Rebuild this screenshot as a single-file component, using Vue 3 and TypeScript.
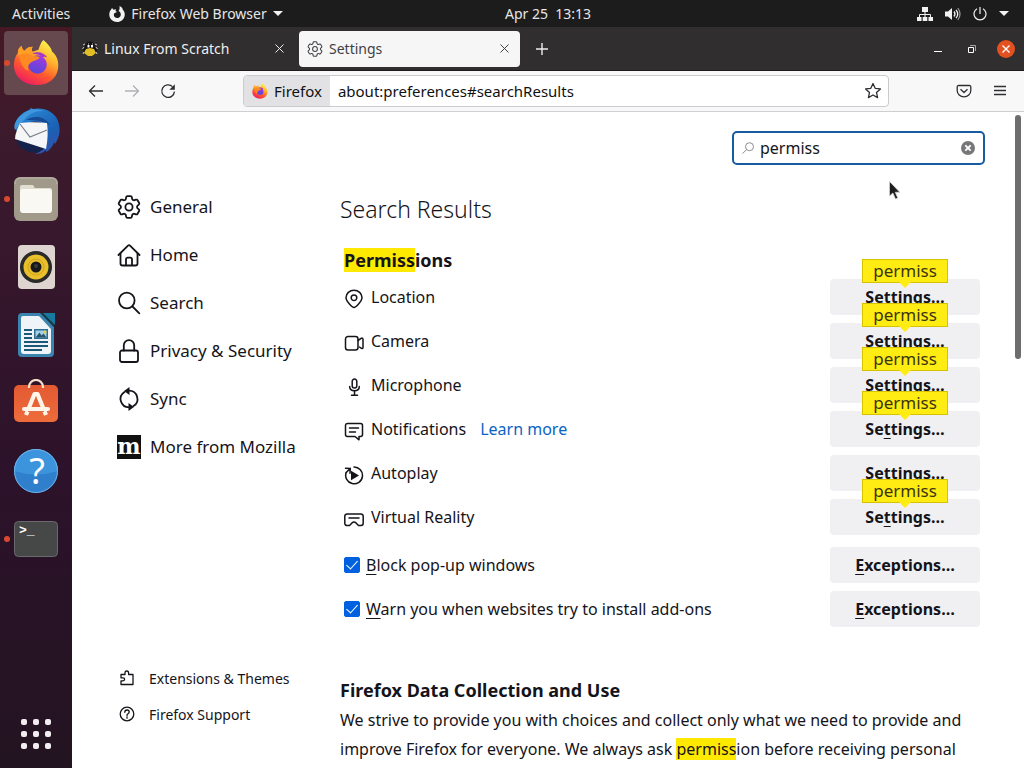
<script setup lang="ts">
import { ref } from 'vue'

interface Glyph {
  box: string
  lines?: string[]
  fills?: string[]
}

interface Permission {
  label: string
  icon: string
  link?: string
  hint: boolean
}

const gear =
  'M9.594 3.94c.09-.542.56-.94 1.11-.94h2.593c.55 0 1.02.398 1.11.94l.213 1.281c.063.374.313.686.645.87.074.04.147.083.22.127.325.196.72.257 1.075.124l1.217-.456a1.125 1.125 0 0 1 1.37.49l1.296 2.247a1.125 1.125 0 0 1-.26 1.431l-1.003.827c-.293.241-.438.613-.43.992a7.723 7.723 0 0 1 0 .255c-.008.378.137.75.43.991l1.004.827c.424.35.534.955.26 1.43l-1.298 2.247a1.125 1.125 0 0 1-1.369.491l-1.217-.456c-.355-.133-.75-.072-1.076.124a6.47 6.47 0 0 1-.22.128c-.331.183-.581.495-.644.869l-.213 1.281c-.09.543-.56.94-1.11.94h-2.594c-.55 0-1.019-.398-1.11-.94l-.213-1.281c-.062-.374-.312-.686-.644-.87a6.52 6.52 0 0 1-.22-.127c-.325-.196-.72-.257-1.076-.124l-1.217.456a1.125 1.125 0 0 1-1.369-.49l-1.297-2.247a1.125 1.125 0 0 1 .26-1.431l1.004-.827c.292-.24.437-.613.43-.991a6.932 6.932 0 0 1 0-.255c.007-.38-.138-.751-.43-.992l-1.004-.827a1.125 1.125 0 0 1-.26-1.43l1.297-2.247a1.125 1.125 0 0 1 1.37-.491l1.216.456c.356.133.751.072 1.076-.124.072-.044.146-.086.22-.128.332-.183.582-.495.644-.869l.214-1.28Z'

const glyphs: Record<string, Glyph> = {
  general: { box: '2 2 20 20', lines: [gear, 'M9 12a3 3 0 1 0 6 0a3 3 0 1 0-6 0'] },
  home: {
    box: '0 0 24 24',
    lines: ['M1.5 12 11 2.6a1.5 1.5 0 0 1 2 0L22.5 12', 'M3.500 10.500v10a2 2 0 0 0 2 2h13a2 2 0 0 0 2-2v-10', 'M9 22v-5.5a1.8 1.8 0 0 1 1.8-1.8h2.4a1.8 1.8 0 0 1 1.8 1.8V22'],
  },
  search: { box: '0 0 24 24', lines: ['M2 9.5a7.8 7.8 0 1 0 15.6 0a7.8 7.8 0 1 0-15.6 0', 'm15.5 15.5 6.8 6.8'] },
  privacy: { box: '0 0 24 24', lines: ['M5 11.5h14a2 2 0 0 1 2 2V21a2 2 0 0 1-2 2H5a2 2 0 0 1-2-2v-7.500a2 2 0 0 1 2-2z', 'M6.800 11.500V6.300a5.200 5.200 0 0 1 10.400 0v5.200'] },
  sync: {
    box: '0 0 24 24',
    lines: ['M12 3.600A8.400 8.400 0 0 1 16.500 19.100', 'M12 20.400A8.400 8.400 0 0 1 7.500 4.900'],
    fills: ['M7 4 12.500 0v8z', 'M17 20l-5.500 4v-8z'],
  },
  location: { box: '0 0 20 20', lines: ['M10 18.600C8.500 18.600 2 12.600 2 8.600a8 7.400 0 0 1 16 0c0 4-6.500 10-8 10z', 'M7.200 8.700a2.800 2.800 0 1 0 5.600 0a2.800 2.800 0 1 0-5.600 0'] },
  camera: { box: '0 0 20 20', lines: ['M4 3.500h7.500a2.500 2.500 0 0 1 2.500 2.500v8.500a2.500 2.500 0 0 1-2.500 2.500H4a2.500 2.500 0 0 1-2.500-2.500V6A2.500 2.500 0 0 1 4 3.500z', 'M14 7.500l3.500-2.300q1.500-.4 1.500 1v8.200q0 1.400-1.500 1L15.500 14'] },
  microphone: { box: '0 0 20 20', lines: ['M10.500 2a2.300 2.300 0 0 1 2.300 2.300v4.500a2.300 2.300 0 0 1-4.600 0V4.300a2.300 2.300 0 0 1 2.300-2.300z', 'M5.700 9.500q0 4.200 4.800 4.200t4.800-4.200', 'M10.500 13.700v4.500M7.500 18.200h6'] },
  notifications: { box: '0 0 20 20', lines: ['M3.500 2.500h13a2 2 0 0 1 2 2v9a2 2 0 0 1-2 2H15v3.300l-4-3.300H3.500a2 2 0 0 1-2-2v-9a2 2 0 0 1 2-2z', 'M5.500 7h9M5.500 11h6'] },
  autoplay: { box: '0 0 20 20', lines: ['M10 2a8.400 8.400 0 1 1-7.800 5.500', 'M1.500 3.200l4.800.2-.3 4.800M6.300 3.400 2.200 7.500'], fills: ['M7 5.800v9.400l8-4.700z'] },
  vr: { box: '0 0 20 20', lines: ['M3 5h14a2.200 2.200 0 0 1 2.200 2.200v7.100a2.200 2.200 0 0 1-2.200 2.200h-2.500l-2.500-2.600q-2-1.700-4 0l-2.500 2.600H3a2.200 2.200 0 0 1-2.200-2.200V7.200A2.200 2.200 0 0 1 3 5z', 'M5 9h10'] },
  extensions: { box: '0 0 16 16', lines: ['M2 4.500h4V3q0-2 1.800-2t1.800 2v1.500H14v10H2v-3.700h2q1.600 0 1.600-1.500T4 7.800H2z'] },
  support: { box: '0 0 16 16', lines: ['M1.200 8a6.800 6.800 0 1 0 13.600 0a6.800 6.800 0 1 0-13.600 0', 'M5.800 6.300q0-2.300 2.200-2.300t2.200 2q0 1-1.200 1.700T8 9.500M8 11v1.200'] },
}

const categories = [
  { label: 'General', icon: 'general' },
  { label: 'Home', icon: 'home' },
  { label: 'Search', icon: 'search' },
  { label: 'Privacy & Security', icon: 'privacy' },
  { label: 'Sync', icon: 'sync' },
  { label: 'More from Mozilla', icon: '' },
]

const helpLinks = [
  { label: 'Extensions & Themes', icon: 'extensions' },
  { label: 'Firefox Support', icon: 'support' },
]

const permissions: Permission[] = [
  { label: 'Location', icon: 'location', hint: true },
  { label: 'Camera', icon: 'camera', hint: true },
  { label: 'Microphone', icon: 'microphone', hint: true },
  { label: 'Notifications', icon: 'notifications', link: 'Learn more', hint: true },
  { label: 'Autoplay', icon: 'autoplay', hint: false },
  { label: 'Virtual Reality', icon: 'vr', hint: true },
]

const options = ref([
  { id: 'popups', key: 'B', rest: 'lock pop-up windows', on: true },
  { id: 'addons', key: 'W', rest: 'arn you when websites try to install add-ons', on: true },
])

const query = ref('permiss')
const address = ref('about:preferences#searchResults')
const gridDots = [0, 1, 2, 3, 4, 5, 6, 7, 8]
</script>

<template>
  <div class="desktop">
    <svg class="defs" aria-hidden="true">
      <defs>
        <linearGradient id="flame" x1="0.8" y1="0.05" x2="0.3" y2="1">
          <stop offset="0" stop-color="#fff44f" />
          <stop offset="0.35" stop-color="#ffb12c" />
          <stop offset="0.65" stop-color="#ff5a2d" />
          <stop offset="1" stop-color="#ee1b62" />
        </linearGradient>
        <linearGradient id="globe" x1="0.7" y1="0" x2="0.3" y2="1">
          <stop offset="0" stop-color="#a23ae0" />
          <stop offset="1" stop-color="#5547d8" />
        </linearGradient>
        <linearGradient id="bird" x1="0.2" y1="0" x2="0.9" y2="1">
          <stop offset="0" stop-color="#2c8ad8" />
          <stop offset="0.6" stop-color="#1a61b4" />
          <stop offset="1" stop-color="#3550ae" />
        </linearGradient>
        <linearGradient id="store" x1="0" y1="0" x2="0" y2="1">
          <stop offset="0" stop-color="#e35a32" />
          <stop offset="1" stop-color="#ee6c3b" />
        </linearGradient>
        <symbol id="firefox" viewBox="0 0 48 48">
          <path fill="url(#flame)" d="M31 1c5 4 8 8 9 12 5 4 7 10 6 17-1 10-10 17-22 17S2 39 1 29c-.5-6 1-11 4-15 0-3 1-5 4-7 0 3 1 4 3 5 2-3 5-4 8-4-1 2-1 4 0 5l6-2c1-3 2-7 5-10z" />
          <path fill="#ff9f26" d="M5 14c0-3 1-5 4-7 0 3 1 4 3 5 2-3 5-4 8-4-1 2-1 4 0 5 3 3 6 3 6 5s-4 3-6 4l-5 3C9 21 6 18 5 14z" />
          <circle cx="25" cy="26" r="9.500" fill="url(#globe)" />
          <path fill="#ff8a24" d="M7 16c5-2 10-1 13 1 3 1 6 0 7 2 0 2-5 3-7 4-4 2-6 5-4 10-6-3-10-10-9-17z" />
          <path fill="#a436c9" d="M20 15c5-3 12-1 15 4-2-1-4-1-5 0-3-3-6-4-10-4z" />
        </symbol>
      </defs>
    </svg>

    <header class="topbar">
      <div class="topbar-left">
        <button type="button" class="bar-button activities">Activities</button>
        <button type="button" class="bar-button app-menu">
          <svg class="app-mark" viewBox="0 0 16 16" aria-hidden="true">
            <path fill="#f2f2f2" d="M10.500 0c2 1 3 2 3.300 3.800C15.500 5.500 16 7.500 15.700 9.500 15 13.500 12 16 8 16S.5 13 .3 9C.2 6.800.8 5 2 3.800L3 1.900l1.500 1.800L7 3.300 6.500 5 8 6 5.300 7.300C4.200 9.500 5.500 12 8 12c2.700 0 4.200-2 3.700-4.300-.3-1.400-1-2-2.200-2.700 1-.8 1.300-2.700 1-5z" />
          </svg>
          Firefox Web Browser
          <span class="caret" aria-hidden="true"></span>
        </button>
      </div>
      <time class="clock">Apr 25&nbsp; 13:13</time>
      <button type="button" class="bar-button tray" aria-label="System menu">
        <svg width="16" height="14" viewBox="0 0 16 14" aria-hidden="true">
          <path fill="#f2f2f2" d="M5 0h6v5H5zM0 10h4.500v4H0zM5.700 10h4.600v4H5.700zM11.500 10H16v4h-4.500z" />
          <path fill="none" stroke="#f2f2f2" d="M8 5v5M2.500 10V7.500h11V10" />
        </svg>
        <svg width="16" height="14" viewBox="0 0 16 14" aria-hidden="true">
          <path fill="#f2f2f2" d="M0 4.500h3L7 1v12L3 9.500H0z" />
          <path fill="none" stroke="#f2f2f2" stroke-width="1.300" d="M9 4.500q2 2.500 0 5M11 2.800q3.500 4.200 0 8.400" />
          <path fill="none" stroke="#9a9a9a" stroke-width="1.200" d="M12.800 1q4.500 6 0 12" />
        </svg>
        <svg width="14" height="14" viewBox="0 0 14 14" aria-hidden="true">
          <path fill="none" stroke="#f2f2f2" stroke-width="1.200" d="M4 1.700a6 6 0 1 0 6 0M7 0v7" />
        </svg>
        <span class="caret" aria-hidden="true"></span>
      </button>
    </header>

    <div class="workspace">
      <nav class="dock" aria-label="Dock">
        <button type="button" class="dock-item active running" aria-label="Firefox">
          <svg width="48" height="48" viewBox="0 0 48 48"><use href="#firefox" x="1" y="0" width="47" height="47" /></svg>
        </button>
        <button type="button" class="dock-item" aria-label="Thunderbird">
          <svg width="48" height="48" viewBox="0 0 48 48">
            <path fill="url(#bird)" d="M17 3 19 1l2 1c9-2 18 1 23 8 5 8 5 19-1 27l-1-2c-1 4-4 8-8 10l0-2c-3 3-7 4-11 4 5-2 8-4 9-9l3-14C33 16 26 13 19 15L5 24C0 17 6 7 17 3z" />
            <path fill="#174a94" d="M14 13c8-5 19-4 24 5-7-4-15-5-24-5z" />
            <path fill="#3f97de" d="M10 8c6-6 14-7 21-4-9 0-14 3-18 8L3 23c-2-5 1-11 7-15z" />
            <path fill="#14234c" d="M4 31l30 8c-4 7-13 8-19 5C9 42 5 37 4 31z" />
            <path fill="#f5f6f8" d="M8 16c8-1 18-1 27 0 1 8 1 16-1 26L3 32q0-4 2-9z" />
            <path fill="none" stroke="#777e88" stroke-width="1.200" d="M8 17l10 13 17-7" />
          </svg>
        </button>
        <button type="button" class="dock-item running" aria-label="Files">
          <svg width="48" height="48" viewBox="0 0 48 48">
            <rect x="2" y="2" width="44" height="44" rx="6" fill="#a19a8b" />
            <path fill="none" stroke="#bdb7a8" d="M3 9q0-6 6-6h30q6 0 6 6" />
            <path fill="#e2decf" d="M8 12q0-2 2-2h10q2 0 2.500 3H38q2 0 2 3H8z" />
            <rect x="8" y="14" width="32" height="24" rx="3" fill="#faf8f3" />
          </svg>
        </button>
        <button type="button" class="dock-item" aria-label="Rhythmbox">
          <svg width="48" height="48" viewBox="0 0 48 48">
            <rect x="6" y="2" width="37" height="44" rx="4" fill="#ded5d0" />
            <circle cx="24" cy="24" r="16" fill="#2a2a29" />
            <circle cx="24" cy="24" r="12.500" fill="#e9c02b" />
            <circle cx="24" cy="24" r="8" fill="none" stroke="#cfa322" />
            <circle cx="24" cy="24" r="5.500" fill="#171817" />
            <circle cx="24" cy="23" r="2" fill="#393b39" />
          </svg>
        </button>
        <button type="button" class="dock-item" aria-label="LibreOffice Writer">
          <svg width="48" height="48" viewBox="0 0 48 48">
            <path fill="#3c83ad" d="M10 2h19l13 14v26q0 4-4 4H10q-4 0-4-4V6q0-4 4-4z" />
            <path fill="#eef4f7" d="M11 5h16l12 13v22q0 3-3 3H12q-3 0-3-3V7q0-2 2-2z" />
            <path fill="#17384b" d="M28 2h14v14z" />
            <path fill="#17799e" d="M31 2h12v12z" />
            <path stroke="#1c5975" stroke-width="2" d="M12 19h8M12 23h8M12 27h8M12 31h24M12 35h24M12 39h18" />
            <path fill="#2b6f95" d="M22 18h14v10H22z" />
            <path fill="#a6d0e5" d="M23.500 19.500h11v7h-11z" />
            <path fill="#27546b" d="M23.500 26.500l4-5 2 3 2-2 3 4z" />
            <circle cx="33" cy="21" r="1.500" fill="#e1d54c" />
          </svg>
        </button>
        <button type="button" class="dock-item" aria-label="Ubuntu Software">
          <svg width="48" height="48" viewBox="0 0 48 48">
            <rect x="2" y="6" width="44" height="37" rx="5" fill="url(#store)" />
            <path fill="none" stroke="#f8e0cd" stroke-width="2.200" d="M17 9V8a7 7 0 0 1 14 0v1" />
            <path fill="none" stroke="#fff5e8" stroke-width="4.200" stroke-linejoin="round" d="M14 36l8.500-21h3L34 36" />
            <path fill="none" stroke="#fff5e8" stroke-width="4" stroke-linecap="round" d="M12 30h24" />
            <path stroke="#df704a" d="M16 32.500h16" />
          </svg>
        </button>
        <button type="button" class="dock-item" aria-label="Help">
          <svg width="48" height="48" viewBox="0 0 48 48">
            <circle cx="24" cy="24" r="22" fill="#2f7fcd" />
            <path fill="#3c94dc" d="M2 24a22 22 0 0 1 44 0q-22 7-44 0z" />
            <circle cx="24" cy="24" r="21.500" fill="none" stroke="#6eb1e5" />
            <text x="25" y="37" text-anchor="middle" class="help-mark">?</text>
          </svg>
        </button>
        <button type="button" class="dock-item running" aria-label="Terminal">
          <svg width="48" height="48" viewBox="0 0 48 48">
            <rect x="2.500" y="6.500" width="43" height="35" rx="4" fill="#464747" stroke="#6a696b" />
            <text x="7" y="19" class="prompt-mark">&gt;_</text>
          </svg>
        </button>
        <button type="button" class="dock-item launcher" aria-label="Show applications">
          <span class="launcher-grid"><i v-for="dot in gridDots" :key="dot"></i></span>
        </button>
      </nav>

      <section class="window" aria-label="Firefox window">
        <div class="tabs">
          <div class="tab">
            <svg width="16" height="16" viewBox="0 0 16 16" aria-hidden="true">
              <path fill="#151515" d="M5 1q3-1 6 0l2 5 2 3-1 4H3L1 9l2-4z" />
              <path fill="none" stroke="#c9c9c9" d="M3 3 1 4M2 6 .5 8M2 11l-1 2M13 3l2 1M14 6l1.500 2M14 11l1 2M6 3h1M10 3h1" />
              <path fill="#e3bd25" d="M4 8l4-1 4 1 2 4-4 3H6l-4-3z" />
              <path fill="#fff" d="M5.500 4h2v2.500h-2zM9 4h2v2.500H9z" />
            </svg>
            <span class="tab-title">Linux From Scratch</span>
            <button type="button" class="tab-close" aria-label="Close Linux From Scratch">
              <svg width="9" height="9" viewBox="0 0 9 9"><path fill="none" stroke="currentColor" d="M.5.5l8 8m0-8l-8 8" /></svg>
            </button>
          </div>
          <div class="tab selected">
            <svg class="glyph small" viewBox="2 2 20 20" aria-hidden="true">
              <path v-for="d in glyphs.general.lines" :key="d" :d="d" />
            </svg>
            <span class="tab-title">Settings</span>
            <button type="button" class="tab-close" aria-label="Close Settings">
              <svg width="9" height="9" viewBox="0 0 9 9"><path fill="none" stroke="currentColor" d="M.5.5l8 8m0-8l-8 8" /></svg>
            </button>
          </div>
          <button type="button" class="new-tab" aria-label="New tab">
            <svg width="12" height="12" viewBox="0 0 12 12"><path stroke="currentColor" stroke-width="1.400" d="M6 0v12M0 6h12" /></svg>
          </button>
          <div class="window-controls">
            <button type="button" aria-label="Minimize">
              <svg width="8" height="8" viewBox="0 0 8 8"><path fill="#fff" d="M0 6h8v1H0z" /></svg>
            </button>
            <button type="button" aria-label="Restore">
              <svg width="8" height="8" viewBox="0 0 8 8">
                <path fill="none" stroke="#fff" d="M.5 2.500h5v5h-5z" />
                <path fill="none" stroke="#a5a5a5" d="M2 .5h5.500V6" />
              </svg>
            </button>
            <button type="button" aria-label="Close window">
              <svg width="18" height="18" viewBox="0 0 18 18">
                <circle cx="9" cy="9" r="9" fill="#e2511f" />
                <path stroke="#fff" stroke-width="1.400" d="M5.500 5.500l7 7m0-7l-7 7" />
              </svg>
            </button>
          </div>
        </div>

        <div class="toolbar">
          <button type="button" class="tool" aria-label="Back">
            <svg width="16" height="16" viewBox="0 0 16 16"><path d="M15 8H1.500M7 2.500 1.500 8 7 13.500" /></svg>
          </button>
          <button type="button" class="tool" aria-label="Forward" disabled>
            <svg width="16" height="16" viewBox="0 0 16 16"><path d="M1 8h13.500M9 2.500 14.500 8 9 13.500" /></svg>
          </button>
          <button type="button" class="tool" aria-label="Reload">
            <svg width="16" height="16" viewBox="0 0 16 16">
              <path d="M12.500 3.600a6.300 6.300 0 1 0 1.900 5" />
              <path class="solid" d="M14.800 1.200v5.500H9.300z" />
            </svg>
          </button>
          <div class="address">
            <span class="identity">
              <svg width="16" height="16" viewBox="0 0 48 48" aria-hidden="true"><use href="#firefox" /></svg>
              Firefox
            </span>
            <input v-model="address" type="text" aria-label="Address" spellcheck="false" />
            <button type="button" class="tool" aria-label="Bookmark this page">
              <svg width="18" height="18" viewBox="0 0 18 18">
                <path d="M9 1.500l2.200 4.800 5.200.6-3.900 3.500 1.100 5.200L9 13l-4.600 2.600 1.100-5.200L1.600 6.900l5.200-.6z" />
              </svg>
            </button>
          </div>
          <button type="button" class="tool" aria-label="Save to Pocket">
            <svg width="16" height="16" viewBox="0 0 16 16">
              <path d="M2.500 2.500h11a1.300 1.300 0 0 1 1.300 1.300v3.700a6.800 6.300 0 0 1-13.600 0V3.800a1.300 1.300 0 0 1 1.300-1.300zM4.500 6.300 8 9.500l3.500-3.200" />
            </svg>
          </button>
          <button type="button" class="tool" aria-label="Open application menu">
            <svg width="16" height="16" viewBox="0 0 16 16"><path d="M2 3.500h12M2 7.500h12M2 11.500h12" /></svg>
          </button>
        </div>

        <div class="page">
          <nav class="sidebar" aria-label="Settings categories">
            <a v-for="item in categories" :key="item.label" class="category" href="#">
              <svg v-if="item.icon" class="glyph large" :class="item.icon" :viewBox="glyphs[item.icon].box" aria-hidden="true">
                <path v-for="d in glyphs[item.icon].lines" :key="d" :d="d" />
                <path v-for="d in glyphs[item.icon].fills" :key="d" :d="d" class="solid" />
              </svg>
              <svg v-else class="mozilla" viewBox="0 0 24 24" aria-hidden="true">
                <rect width="24" height="24" fill="#111" />
                <text x="12" y="19" text-anchor="middle">m</text>
              </svg>
              <span class="category-label">{{ item.label }}</span>
            </a>
            <div class="help-links">
              <a v-for="item in helpLinks" :key="item.label" class="help-link" href="#">
                <svg class="glyph small" :viewBox="glyphs[item.icon].box" aria-hidden="true">
                  <path v-for="d in glyphs[item.icon].lines" :key="d" :d="d" />
                </svg>
                {{ item.label }}
              </a>
            </div>
          </nav>

          <main class="results">
            <div class="search-row">
              <div class="search-box">
                <svg class="lens" width="12" height="12" viewBox="0 0 12 12" aria-hidden="true">
                  <path fill="none" stroke="#8c8c92" d="M3.500 4.700a4 4 0 1 0 8 0a4 4 0 1 0-8 0M4.700 7.500.6 11.500" />
                </svg>
                <input v-model="query" type="text" aria-label="Find in Settings" spellcheck="false" />
                <button type="button" class="clear" aria-label="Clear" @click="query = ''">
                  <svg width="14" height="14" viewBox="0 0 14 14">
                    <circle cx="7" cy="7" r="7" fill="#77777a" />
                    <path stroke="#fff" stroke-width="1.800" d="M4.300 4.300l5.400 5.400m0-5.400L4.300 9.700" />
                  </svg>
                </button>
              </div>
            </div>

            <h1>Search Results</h1>

            <section class="group">
              <h2><mark>Permiss</mark>ions</h2>
              <div v-for="item in permissions" :key="item.label" class="row">
                <svg class="glyph medium" :viewBox="glyphs[item.icon].box" aria-hidden="true">
                  <path v-for="d in glyphs[item.icon].lines" :key="d" :d="d" />
                  <path v-for="d in glyphs[item.icon].fills" :key="d" :d="d" class="solid" />
                </svg>
                <span>{{ item.label }}</span>
                <a v-if="item.link" class="learn" href="#">{{ item.link }}</a>
                <div class="action">
                  <button type="button" class="push">Se<u>t</u>tings…</button>
                  <span v-if="item.hint" class="hint">permiss</span>
                </div>
              </div>
              <div class="options">
                <div v-for="item in options" :key="item.id" class="row">
                  <input :id="item.id" v-model="item.on" type="checkbox" />
                  <label :for="item.id"><u>{{ item.key }}</u>{{ item.rest }}</label>
                  <div class="action">
                    <button type="button" class="push"><u>E</u>xceptions…</button>
                  </div>
                </div>
              </div>
            </section>

            <section class="data">
              <h2>Firefox Data Collection and Use</h2>
              <p>
                We strive to provide you with choices and collect only what we need to provide and
                improve Firefox for everyone. We always ask <mark>permiss</mark>ion before receiving personal
              </p>
            </section>
          </main>

          <div class="scrollbar" aria-hidden="true"></div>
          <svg class="pointer" width="12" height="19" viewBox="0 0 12 19" aria-hidden="true">
            <path fill="#1e1e1e" stroke="#d8d8d8" stroke-width=".7" d="M.5.5v14.500l3.400-3 2.600 6 2.300-1-2.600-5.800h4.600z" />
          </svg>
        </div>
      </section>
    </div>
  </div>
</template>

<style>
body {
  margin: 0;
}
</style>

<style scoped>
.desktop {
  display: flex;
  flex-direction: column;
  height: 100vh;
  overflow: hidden;
  color: #15141a;
  font-family: "Noto Sans", "Open Sans", sans-serif;
  font-size: 16px;
}

.desktop *,
.desktop *::after {
  box-sizing: border-box;
}

.defs {
  position: absolute;
  width: 0;
  height: 0;
}

button {
  display: flex;
  align-items: center;
  justify-content: center;
  flex: none;
  padding: 0;
  border: 0;
  background: none;
  color: inherit;
  font: inherit;
}

input {
  margin: 0;
  padding: 0;
  border: 0;
  outline: 0;
  background: none;
  color: inherit;
  font: inherit;
}

svg {
  flex: none;
}

a {
  color: inherit;
  text-decoration: none;
}

.topbar {
  display: flex;
  align-items: center;
  flex: none;
  height: 27px;
  background: #1c1c1c;
  color: #e6e6e6;
  font-size: 14px;
}

.topbar-left {
  display: flex;
  flex: 1;
  gap: 39px;
  padding-left: 12px;
}

.bar-button {
  white-space: nowrap;
}

.app-menu {
  gap: 6px;
}

.app-mark {
  width: 16px;
  height: 16px;
}

.caret {
  border: 5px solid transparent;
  border-top-color: #f2f2f2;
  border-bottom: 0;
}

.clock {
  margin-left: 75px;
}

.tray {
  flex: 1;
  justify-content: flex-end;
  gap: 12px;
  padding-right: 15px;
}

.workspace {
  display: flex;
  flex: 1;
  min-height: 0;
}

.dock {
  display: flex;
  flex-direction: column;
  flex: none;
  width: 72px;
  padding-top: 2px;
  background: linear-gradient(#451824, #3c1a2d 15%, #2c122a 60%, #231421);
}

.dock-item {
  position: relative;
  width: 64px;
  height: 64px;
  margin: 2px 4px;
  border-radius: 4px;
}

.dock-item.active {
  background: #66484f;
}

.running::after {
  content: "";
  position: absolute;
  left: 0;
  top: 29px;
  width: 6px;
  height: 6px;
  border-radius: 50%;
  background: #d8492f;
}

.help-mark {
  fill: #fff;
  font: 36px "Noto Sans", sans-serif;
}

.prompt-mark {
  fill: #fff;
  font: bold 13px "Liberation Mono", monospace;
}

.launcher {
  margin-top: auto;
}

.launcher-grid {
  display: grid;
  grid-template-columns: repeat(3, 6px);
  gap: 6px;
}

.launcher-grid i {
  height: 6px;
  border-radius: 2px;
  background: #f3edf2;
}

.window {
  display: flex;
  flex-direction: column;
  flex: 1;
  min-width: 0;
  background: #fff;
}

.tabs {
  display: flex;
  align-items: center;
  flex: none;
  gap: 4px;
  height: 44px;
  border-bottom: 1px solid #1c1b1b;
  background: #302e2f;
  color: #eeeeee;
}

.tab {
  display: flex;
  align-items: center;
  gap: 6px;
  width: 221px;
  height: 36px;
  padding: 0 6px 0 8px;
  border-radius: 4px;
  font-size: 14px;
}

.tab:first-child {
  width: 223px;
  padding-left: 10px;
}

.tab.selected {
  background: #f6f6f7;
  color: #3f3f45;
}

.tab-title {
  flex: 1;
}

.tab-close {
  width: 20px;
  height: 20px;
}

.new-tab {
  width: 36px;
  height: 36px;
}

.window-controls {
  display: flex;
  margin-left: auto;
  padding-right: 1px;
}

.window-controls button {
  width: 34px;
  height: 34px;
}

.toolbar {
  display: flex;
  align-items: center;
  flex: none;
  gap: 4px;
  height: 41px;
  padding: 0 8px;
  border-bottom: 1px solid #cfcfd3;
  background: #f8f8f9;
}

.tool {
  width: 32px;
  height: 32px;
}

.tool svg {
  fill: none;
  stroke: #2f2f33;
  stroke-width: 1.3;
  stroke-linejoin: round;
}

.tool .solid {
  fill: #2f2f33;
  stroke: none;
}

.tool:disabled svg {
  stroke: #b1b1b4;
}

.address {
  display: flex;
  flex: 1;
  min-width: 0;
  height: 32px;
  margin: 0 55px;
  border: 1px solid #cbcbce;
  border-radius: 4px;
  background: #fff;
  color: #111;
  font-size: 15px;
}

.address input {
  flex: 1;
  min-width: 0;
  padding-left: 8px;
}

.address .tool {
  width: 30px;
  height: 30px;
}

.identity {
  display: flex;
  align-items: center;
  gap: 6px;
  padding: 0 8px;
  border-radius: 3px 0 0 3px;
  background: #e2e2e4;
}

.page {
  position: relative;
  display: flex;
  flex: 1;
  min-height: 0;
  overflow: hidden;
}

.sidebar {
  display: flex;
  flex-direction: column;
  flex: none;
  width: 268px;
  padding: 71px 0 36px 45px;
}

.category,
.help-link {
  display: flex;
  align-items: center;
}

.category {
  gap: 9px;
  height: 48px;
  font-size: 17px;
}

.category-label {
  padding-bottom: 2px;
}

.help-links {
  margin-top: auto;
}

.help-link {
  gap: 14px;
  height: 36px;
  padding-left: 2px;
  font-size: 14px;
}

.glyph {
  fill: none;
  stroke: currentColor;
  stroke-linecap: round;
  stroke-linejoin: round;
}

.glyph .solid {
  fill: currentColor;
  stroke: none;
}

.large {
  width: 24px;
  height: 24px;
  stroke-width: 1.8;
}

.large.general {
  stroke-width: 1.5;
}

.medium {
  width: 20px;
  height: 20px;
  margin-top: 4px;
  stroke-width: 1.5;
}

.small {
  width: 16px;
  height: 16px;
  stroke-width: 1.3;
}

.mozilla {
  width: 24px;
  height: 24px;
}

.mozilla text {
  fill: #fff;
  font: bold 22px "DejaVu Serif", serif;
}

.results {
  flex: 1;
  min-width: 0;
  padding: 19px 44px 0 0;
}

.search-row {
  display: flex;
  justify-content: flex-end;
  margin-right: -5px;
}

.search-box {
  display: flex;
  align-items: center;
  gap: 6px;
  width: 253px;
  height: 34px;
  padding: 0 8px;
  border: 2px solid #165c9f;
  border-radius: 5px;
}

.search-box input {
  flex: 1;
  min-width: 0;
}

h1 {
  margin: 27px 0 0;
  font-size: 23px;
  font-weight: 300;
  line-height: 34px;
}

h2 {
  margin: 0;
  font-size: 18px;
  font-weight: 700;
  line-height: 22px;
}

mark {
  background: #ffe900;
  color: inherit;
}

.group {
  padding: 23px 0 0 4px;
}

.group h2 {
  margin-bottom: 4px;
}

.row {
  display: flex;
  align-items: center;
  height: 44px;
}

.row .medium {
  margin-right: 7px;
}

.learn {
  margin-left: 14px;
  color: #0a63c4;
}

.action {
  position: relative;
  width: 150px;
  margin-left: auto;
}

.push {
  display: block;
  width: 100%;
  height: 36px;
  border-radius: 4px;
  background: #f0f0f2;
  font-weight: 700;
  text-align: center;
}

u {
  text-underline-offset: 3px;
}

.hint {
  position: absolute;
  left: 32px;
  right: 32px;
  top: -20px;
  z-index: 1;
  height: 24px;
  border: 1px solid #d7c200;
  background: #ffec13;
  color: #3c3510;
  font-size: 17px;
  line-height: 22px;
  text-align: center;
}

.hint::after {
  content: "";
  position: absolute;
  left: 36px;
  top: 22px;
  border: 6px solid transparent;
  border-top-color: #ffec13;
  border-bottom: 0;
}

.options {
  padding-top: 4px;
}

.options input {
  position: relative;
  flex: none;
  appearance: none;
  width: 16px;
  height: 16px;
  margin-right: 6px;
  border: 1px solid #8f8f9d;
  border-radius: 2px;
}

.options input:checked {
  border-color: #0061e0;
  background: #0061e0;
}

.options input:checked::after {
  content: "";
  position: absolute;
  left: 4px;
  top: 0;
  width: 6px;
  height: 11px;
  border: solid #fff;
  border-width: 0 1px 1px 0;
  transform: rotate(42deg);
}

.data {
  padding-top: 48px;
}

.data p {
  margin: 5px 0 0;
  line-height: 29px;
}

.scrollbar {
  position: absolute;
  right: 3px;
  top: 3px;
  width: 6px;
  height: 244px;
  border-radius: 3px;
  background: #6d6d6d;
}

.pointer {
  position: absolute;
  left: 817px;
  top: 69px;
}
</style>
